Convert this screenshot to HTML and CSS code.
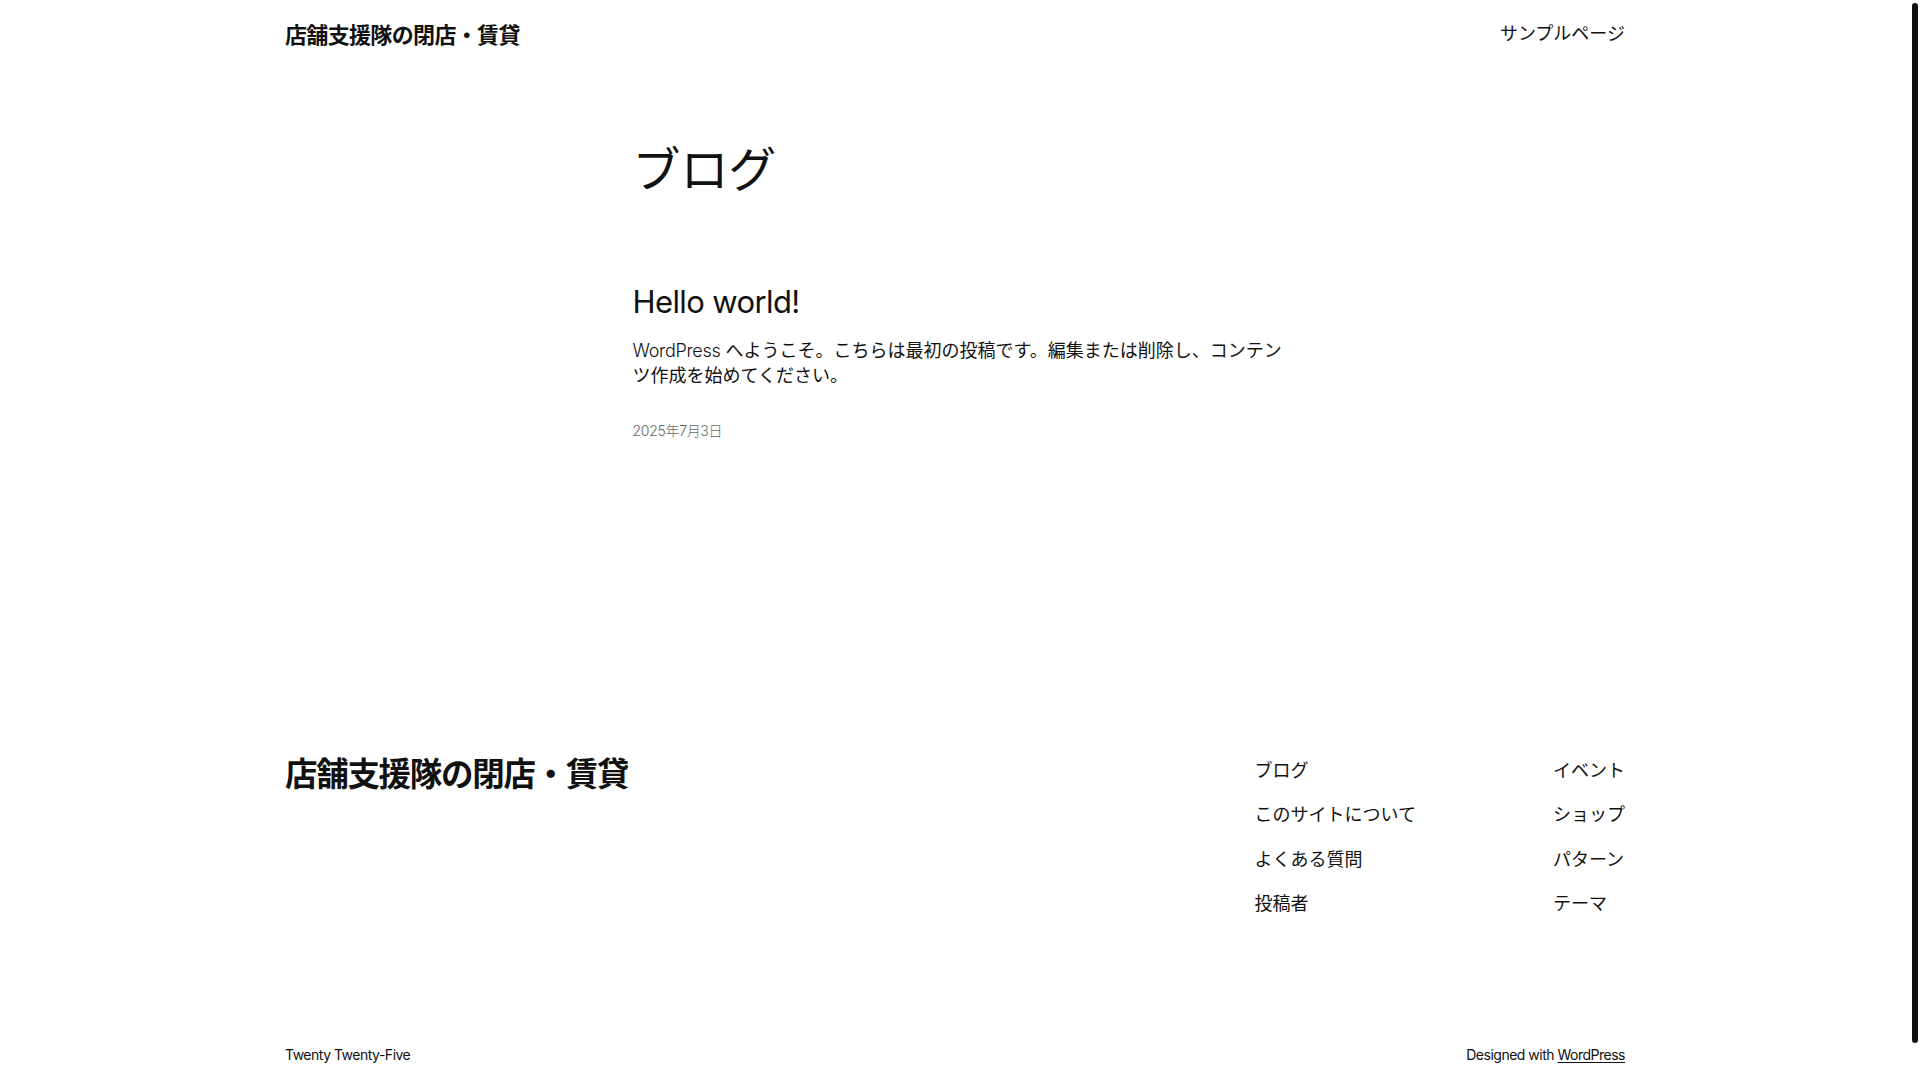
FILE: index.html
```html
<!DOCTYPE html>
<html lang="ja">
<head>
<meta charset="utf-8">
<title>ブログ – 店舗支援隊の閉店・賃貸</title>
<link rel="stylesheet" href="styles.css">
</head>
<body>
<div class="page">
  <header class="site-header">
    <p class="site-title"><a href="#">店舗支援隊の閉店・賃貸</a></p>
    <nav class="top-nav"><a href="#">サンプルページ</a></nav>
  </header>

  <main class="main">
    <h1 class="page-title">ブログ</h1>
    <article class="post">
      <h2 class="post-title"><a href="#">Hello world!</a></h2>
      <p class="excerpt"><span class="latin">WordPress</span> へようこそ。こちらは最初の投稿です。編集または削除し、コンテンツ作成を始めてください。</p>
      <time class="post-date">2025年7月3日</time>
    </article>
  </main>

  <footer class="site-footer">
    <div class="footer-top">
      <p class="footer-title"><a href="#">店舗支援隊の閉店・賃貸</a></p>
      <div class="footer-navs">
        <ul class="footer-nav">
          <li><a href="#">ブログ</a></li>
          <li><a href="#">このサイトについて</a></li>
          <li><a href="#">よくある質問</a></li>
          <li><a href="#">投稿者</a></li>
        </ul>
        <ul class="footer-nav">
          <li><a href="#">イベント</a></li>
          <li><a href="#">ショップ</a></li>
          <li><a href="#">パターン</a></li>
          <li><a href="#">テーマ</a></li>
        </ul>
      </div>
    </div>
    <div class="footer-bottom">
      <span class="credit">Twenty Twenty-Five</span>
      <span class="credit">Designed with <a class="u" href="#">WordPress</a></span>
    </div>
  </footer>
</div>
<div class="scroll-thumb" aria-hidden="true"></div>
</body>
</html>
```

FILE: styles.css
```css
html {
  background: #fff;
}
body {
  margin: 0;
  padding-right: 10px;
  color: #111;
  font-family: Inter, "Noto Sans CJK JP", sans-serif;
  font-size: 18px;
  line-height: 1.4;
  font-weight: 400;
}
a {
  color: inherit;
  text-decoration: none;
}
p, h1, h2, ul {
  margin: 0;
  padding: 0;
}
.page {
  width: 1340px;
  margin: 0 auto;
  padding-bottom: 54px;
}
.site-header {
  height: 68px;
  display: flex;
  align-items: center;
  justify-content: space-between;
}
.site-title {
  font-size: 22px;
  font-weight: 700;
  line-height: 1.2;
  letter-spacing: -0.03em;
  padding-top: 2px;
}
.top-nav {
  font-size: 18px;
  font-weight: 400;
}
.main {
  width: 645px;
  margin: 0 auto;
  padding-top: 75px;
}
.page-title {
  font-size: 48px;
  font-weight: 400;
  line-height: 1.125;
  letter-spacing: -0.1px;
}
.post {
  margin-top: 86px;
  display: flex;
  flex-direction: column;
}
.post-title {
  font-size: 31px;
  font-weight: 400;
  line-height: 1.2;
  letter-spacing: -0.6px;
}
.excerpt {
  margin-top: 18px;
  margin-right: -8px;
  font-size: 18px;
}
.latin {
  font-weight: 300;
  letter-spacing: -0.3px;
}
.post-date {
  margin-top: 32px;
  font-size: 14px;
  color: #666;
  font-weight: 300;
  letter-spacing: -0.3px;
}
.site-footer {
  margin-top: 314px;
}
.footer-top {
  display: flex;
  justify-content: space-between;
  align-items: flex-start;
}
.footer-title {
  font-size: 32.5px;
  font-weight: 700;
  line-height: 1.3;
  letter-spacing: -0.04em;
}
.footer-navs {
  display: flex;
  gap: 137px;
  padding-top: 4px;
}
.footer-nav {
  list-style: none;
  display: flex;
  flex-direction: column;
  gap: 19px;
  font-size: 18px;
  font-weight: 400;
}
.footer-bottom {
  margin-top: 129px;
  display: flex;
  justify-content: space-between;
  font-size: 14px;
  font-weight: 400;
  letter-spacing: -0.5px;
}
.u {
  text-decoration: underline;
  text-underline-offset: 2px;
}
.scroll-thumb {
  position: fixed;
  top: 3px;
  right: 2px;
  width: 6px;
  height: 1040px;
  background: #111;
  border-radius: 3px;
}
```
